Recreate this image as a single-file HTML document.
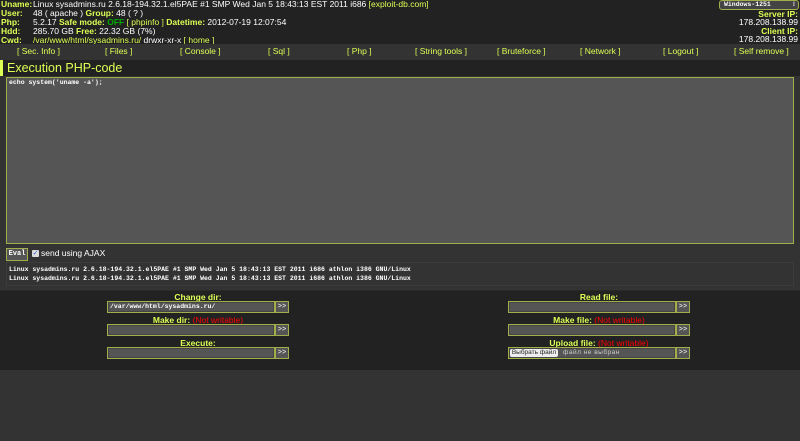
<!DOCTYPE html>
<html><head><meta charset="utf-8"><style>
body{margin:0;width:800px;height:441px;background:#333;font-family:"Liberation Sans","DejaVu Sans",sans-serif;overflow:hidden;position:relative;color:#fff}
.a{position:absolute;white-space:nowrap}
.h{font-size:8.5px;color:#fff}
.y{color:#df5;font-weight:bold}
.g{color:#df5}
.m{font-family:"Liberation Mono","DejaVu Sans Mono",monospace}
.inp{position:absolute;height:10px;background:#555;border:1px solid #a3ad4a;box-shadow:inset 0 0 0 1px #444}
.btn{position:absolute;width:12px;height:10px;background:#555;border:1px solid #a3ad4a;font-size:7px;color:#fff;text-align:center;line-height:10px;font-family:"Liberation Mono",monospace}
.lbl{position:absolute;font-size:8.5px;font-weight:bold;color:#df5;text-align:center;width:200px}
.r{color:#f00;font-weight:normal}
</style></head><body>
<div class="a" style="left:0;top:0;width:800px;height:44px;background:#222"></div>
<div class="a h" style="left:1px;top:0;line-height:9px">
<span class="y">Uname:</span><br><span class="y">User:</span><br><span class="y">Php:</span><br><span class="y">Hdd:</span><br><span class="y">Cwd:</span></div>
<div class="a h" style="left:33px;top:0;line-height:9px">
Linux sysadmins.ru 2.6.18-194.32.1.el5PAE #1 SMP Wed Jan 5 18:43:13 EST 2011 i686 <span class="g">[exploit-db.com]</span><br>
48 ( apache ) <span class="y">Group:</span> 48 ( ? )<br>
5.2.17 <span class="y">Safe mode:</span> <span style="color:#0a0;font-weight:bold">OFF</span> <span class="g">[ phpinfo ]</span> <span class="y">Datetime:</span> 2012-07-19 12:07:54<br>
285.70 GB <span class="y">Free:</span> 22.32 GB (7%)<br>
<span class="g">/var/www/html/sysadmins.ru/</span> drwxr-xr-x <span class="g">[ home ]</span></div>
<div class="a m" style="left:719px;top:0px;width:74px;height:8px;background:#444;border:1px solid #a3ad4a;border-radius:3px;font-size:6.5px;line-height:8px;padding-left:4px;box-sizing:content-box;font-weight:bold">Windows-1251<span style="float:right;margin-right:3px">⁝</span></div>
<div class="a h" style="right:2px;top:10px;line-height:8.3px;text-align:right"><span class="y">Server IP:</span><br>178.208.138.99<br><span class="y">Client IP:</span><br>178.208.138.99</div>
<div class="a" style="left:0;top:44px;width:800px;height:16px;background:#333;font-size:8.5px;color:#df5;line-height:14px">
<span class="a" style="left:17px">[ Sec. Info ]</span><span class="a" style="left:105px">[ Files ]</span><span class="a" style="left:180px">[ Console ]</span><span class="a" style="left:268px">[ Sql ]</span><span class="a" style="left:347px">[ Php ]</span><span class="a" style="left:415px">[ String tools ]</span><span class="a" style="left:497px">[ Bruteforce ]</span><span class="a" style="left:580px">[ Network ]</span><span class="a" style="left:663px">[ Logout ]</span><span class="a" style="left:734px">[ Self remove ]</span></div>
<div class="a" style="left:0;top:60px;width:800px;height:16px;background:#222"></div>
<div class="a" style="left:0;top:60px;width:3px;height:16px;background:#df5"></div>
<div class="a" style="left:7px;top:60px;font-size:12.5px;color:#df5;line-height:16px">Execution PHP-code</div>
<div class="a" style="left:6px;top:77px;width:786px;height:165px;background:#555;border:1px solid #a3ad4a"></div>
<div class="a m" style="left:9px;top:79px;font-size:6.5px;color:#fff;font-weight:bold">echo system('uname -a');</div>
<div class="a m" style="left:6px;top:248px;width:20px;height:11px;background:#555;border:1px solid #a3ad4a;font-size:7px;line-height:11px;text-align:center;font-weight:bold">Eval</div>
<div class="a" style="left:32px;top:250px;width:7px;height:7px;background:#ddd;border-radius:1px;color:#36c;font-size:7px;line-height:7px;text-align:center">✓</div>
<div class="a" style="left:41px;top:248px;font-size:8.5px;line-height:11px">send using AJAX</div>
<div class="a" style="left:6px;top:262px;width:786px;height:22px;border:1px solid #3c3c3c"></div>
<div class="a m" style="left:9px;top:265px;font-size:6.5px;line-height:9px;font-weight:bold">Linux sysadmins.ru 2.6.18-194.32.1.el5PAE #1 SMP Wed Jan 5 18:43:13 EST 2011 i686 athlon i386 GNU/Linux<br>Linux sysadmins.ru 2.6.18-194.32.1.el5PAE #1 SMP Wed Jan 5 18:43:13 EST 2011 i686 athlon i386 GNU/Linux</div>
<div class="a" style="left:0;top:290px;width:800px;height:79px;background:#222;border-top:1px solid #2a2a2a"></div>
<div class="lbl" style="left:98px;top:292px">Change dir:</div>
<div class="inp m" style="left:107px;top:301px;font-size:6.5px;font-weight:bold;line-height:10px;padding-left:2px;box-sizing:content-box;width:164px">/var/www/html/sysadmins.ru/</div><div class="btn" style="left:275px;top:301px">&gt;&gt;</div>
<div class="lbl" style="left:98px;top:315px">Make dir: <span class="r">(Not writable)</span></div>
<div class="inp" style="left:107px;top:324px;width:166px"></div><div class="btn" style="left:275px;top:324px">&gt;&gt;</div>
<div class="lbl" style="left:98px;top:338px">Execute:</div>
<div class="inp" style="left:107px;top:347px;width:166px"></div><div class="btn" style="left:275px;top:347px">&gt;&gt;</div>
<div class="lbl" style="left:499px;top:292px">Read file:</div>
<div class="inp" style="left:508px;top:301px;width:166px"></div><div class="btn" style="left:676px;top:301px">&gt;&gt;</div>
<div class="lbl" style="left:499px;top:315px">Make file: <span class="r">(Not writable)</span></div>
<div class="inp" style="left:508px;top:324px;width:166px"></div><div class="btn" style="left:676px;top:324px">&gt;&gt;</div>
<div class="lbl" style="left:499px;top:338px">Upload file: <span class="r">(Not writable)</span></div>
<div class="inp" style="left:508px;top:347px;width:166px"></div><div class="btn" style="left:676px;top:347px">&gt;&gt;</div>
<div class="a" style="left:510px;top:349px;width:48px;height:8px;background:#eee;border-radius:2px;color:#222;font-size:6.5px;line-height:8px;text-align:center">Выбрать файл</div>
<div class="a" style="left:563px;top:348px;font-size:6.5px;color:#ccc;line-height:10px;letter-spacing:0.5px">файл не выбран</div>
</body></html>
